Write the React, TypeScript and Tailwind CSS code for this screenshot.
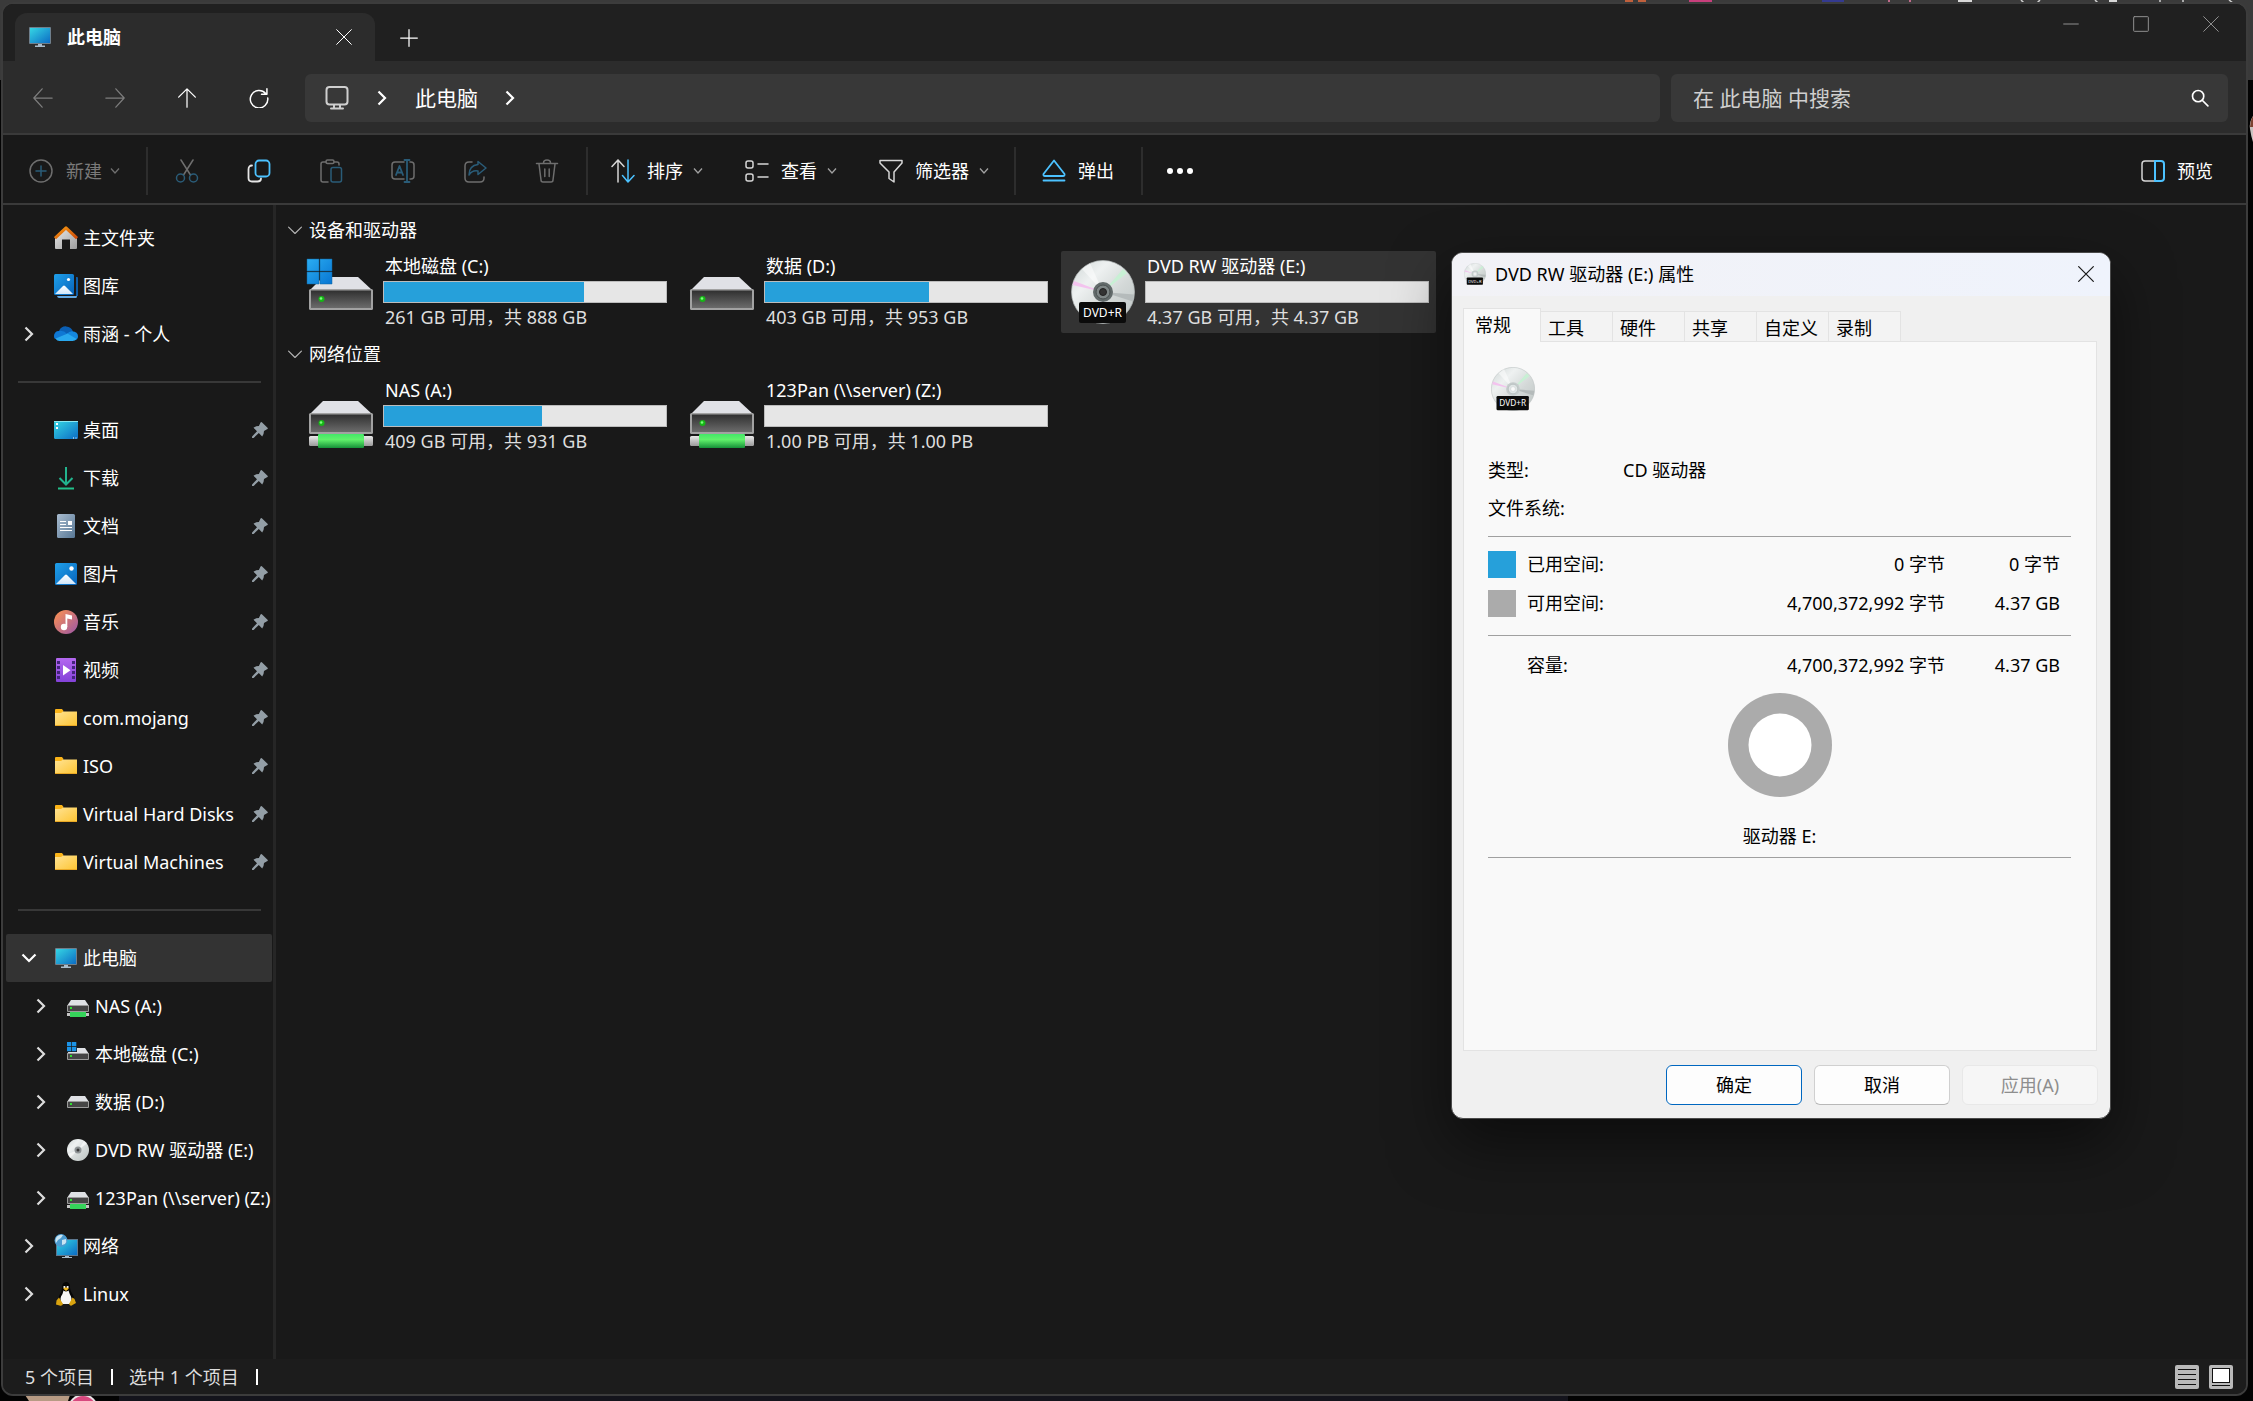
import { ReactNode } from "react";

type IconProps = { className?: string };

function Line({ children, className = "size-6", stroke = "#ffffff", width = 1.5 }: { children: ReactNode; className?: string; stroke?: string; width?: number }) {
  return (
    <svg viewBox="0 0 24 24" className={`shrink-0 ${className}`} fill="none" stroke={stroke} strokeWidth={width} strokeLinecap="round" strokeLinejoin="round" aria-hidden="true">
      {children}
    </svg>
  );
}

function ChevronSmall({ stroke = "#a0a0a0" }: { stroke?: string }) {
  return (
    <svg viewBox="0 0 10 8" className="h-2 w-[10px] shrink-0" fill="none" stroke={stroke} strokeWidth="1.3">
      <path d="M1 1.5 5 6l4-4.5" />
    </svg>
  );
}

function Chevron({ open, stroke = "#dcdcdc" }: { open?: boolean; stroke?: string }) {
  return (
    <svg viewBox="0 0 16 16" className="size-4 shrink-0" fill="none" stroke={stroke} strokeWidth="2.2">
      {open ? <path d="M1.5 4.5 8 11l6.500-6.500" /> : <path d="M4.500 1.500 11 8l-6.500 6.500" />}
    </svg>
  );
}

/* ---------- sidebar icons ---------- */

function Monitor({ className = "size-6" }: IconProps) {
  return (
    <svg viewBox="0 0 24 24" className={`shrink-0 ${className}`}>
      <defs>
        <linearGradient id="mon" x1="0" y1="0" x2="1" y2="1">
          <stop offset="0" stopColor="#35d6e4" />
          <stop offset="1" stopColor="#0c6cc4" />
        </linearGradient>
      </defs>
      <rect x="1" y="2" width="22" height="17" rx="1" fill="#6f7f8c" />
      <rect x="2" y="3" width="20" height="15" fill="url(#mon)" />
      <path d="M10 19h4v1.500h3V22H7v-1.500h3z" fill="#a9bccb" />
    </svg>
  );
}

function Home() {
  return (
    <svg viewBox="0 0 24 24" className="size-6 shrink-0">
      <defs>
        <linearGradient id="wall" x1="0" y1="0" x2="1" y2="1">
          <stop offset="0" stopColor="#e8e8e8" />
          <stop offset="1" stopColor="#9d9d9d" />
        </linearGradient>
        <linearGradient id="roof" x1="0" y1="0" x2="1" y2="1">
          <stop offset="0" stopColor="#f79a12" />
          <stop offset="1" stopColor="#cf4a08" />
        </linearGradient>
      </defs>
      <path d="M12 3 1 12.500V22q0 1 1 1h6V13.500h8V23h6q1 0 1-1v-9.500z" fill="url(#wall)" />
      <path d="M1 12.200 12 1.800l11 10.400" fill="none" stroke="url(#roof)" strokeWidth="3" strokeLinejoin="round" />
    </svg>
  );
}

function Picture({ gallery }: { gallery?: boolean }) {
  return (
    <svg viewBox="0 0 24 24" className="size-6 shrink-0">
      <defs>
        <linearGradient id="pic" x1="0" y1="0" x2="1" y2="1">
          <stop offset="0" stopColor="#1fa0ea" />
          <stop offset="1" stopColor="#0763bb" />
        </linearGradient>
        <linearGradient id="hill" x1="0" y1="0" x2="0" y2="1">
          <stop offset="0" stopColor="#ffffff" />
          <stop offset="1" stopColor="#cfe6fa" />
        </linearGradient>
      </defs>
      {gallery ? (
        <>
          <path d="M22 3h1q1 0 1 1v18h-2z" fill="#0f5ea8" />
          <path d="M3 22h20q0 2-1 2H5q-1.500 0-2-2z" fill="#62a8e2" />
          <rect x="0" y="0" width="20" height="21" rx="1.500" fill="url(#pic)" />
          <circle cx="14.500" cy="5.500" r="1.600" fill="#fff" />
          <path d="m1 20 8-8q1-1 2 0l8 8z" fill="url(#hill)" />
        </>
      ) : (
        <>
          <rect x="1" y="1" width="22" height="22" rx="1.500" fill="url(#pic)" />
          <circle cx="17.500" cy="6.500" r="2.200" fill="#fff" />
          <path d="m2 22 9-9q1-1 2 0l9 9z" fill="url(#hill)" />
        </>
      )}
    </svg>
  );
}

function Cloud() {
  return (
    <svg viewBox="0 0 24 24" className="size-6 shrink-0">
      <path d="M4 18a4.600 4.600 0 0 1 1-9.100A7.500 7.500 0 0 1 19 9.500L12 15z" fill="#0a5fb4" />
      <path d="M5 8.900A5.200 5.200 0 0 0 1 17l12-5.300q-3-3.400-8-2.800z" fill="#0f78d4" />
      <path d="M18 9.200q6 .5 6 5 0 3-3 4l-8-6.500q2-2.300 5-2.500z" fill="#1487dd" />
      <path d="M1.500 16.500 13.500 11.500l8.800 5.300Q21.200 19 18.500 19H5.500q-2.500 0-4-2.500z" fill="#29a8ee" />
    </svg>
  );
}

function Desktop() {
  return (
    <svg viewBox="0 0 24 24" className="size-6 shrink-0">
      <rect x="0" y="3" width="24" height="18" rx="1.500" fill="url(#mon)" />
      <path d="M0 3.500h24" stroke="#8ce8f2" strokeWidth="1" />
      <path d="M2 5h2v2H2zM2 9h2v2H2zM19 19.500h1v1h-1zM21.500 19.500h1v1h-1z" fill="#fff" />
    </svg>
  );
}

function Download() {
  return (
    <svg viewBox="0 0 24 24" className="size-6 shrink-0" fill="none" strokeWidth="2">
      <path d="M12 1v17M5.500 12l6.500 6.500L18.500 12" stroke="#22b48e" />
      <path d="M4 22.500h16" stroke="#22c08a" />
    </svg>
  );
}

function Doc() {
  return (
    <svg viewBox="0 0 24 24" className="size-6 shrink-0">
      <defs>
        <linearGradient id="doc" x1="0" y1="0" x2="1" y2="1">
          <stop offset="0" stopColor="#a9bccf" />
          <stop offset="1" stopColor="#587896" />
        </linearGradient>
      </defs>
      <rect x="3" y="0" width="18" height="24" rx="1.500" fill="url(#doc)" />
      <path d="M6 7.500h6M6 10.500h6M6 13.500h12M6 16.500h12" stroke="#fff" strokeWidth="1.200" />
      <rect x="14" y="7" width="4" height="4" fill="#fff" />
    </svg>
  );
}

function Music() {
  return (
    <svg viewBox="0 0 24 24" className="size-6 shrink-0">
      <defs>
        <linearGradient id="mus" x1="0" y1="0" x2="1" y2="1">
          <stop offset="0.100" stopColor="#f58d57" />
          <stop offset="1" stopColor="#9a56a8" />
        </linearGradient>
      </defs>
      <circle cx="12" cy="12" r="12" fill="url(#mus)" />
      <circle cx="10" cy="17" r="3.200" fill="#fff" />
      <path d="M11.500 17V4l6.500 1.500v4L13.300 8.500V17z" fill="#fff" />
    </svg>
  );
}

function Video() {
  return (
    <svg viewBox="0 0 24 24" className="size-6 shrink-0">
      <defs>
        <linearGradient id="vid" x1="0" y1="0" x2="0" y2="1">
          <stop offset="0" stopColor="#b468f0" />
          <stop offset="1" stopColor="#8342d8" />
        </linearGradient>
      </defs>
      <rect x="2" y="0" width="20" height="24" rx="1" fill="url(#vid)" />
      <path d="M3 3h3v3H3zM3 8h3v3H3zM3 13h3v3H3zM3 18h3v3H3zM18 3h3v3h-3zM18 8h3v3h-3zM18 13h3v3h-3zM18 18h3v3h-3z" fill="#44247c" />
      <path d="M9 7v10.500l7.500-5.200z" fill="#fff" />
    </svg>
  );
}

function Folder() {
  return (
    <svg viewBox="0 0 24 24" className="size-6 shrink-0">
      <defs>
        <linearGradient id="fold" x1="0" y1="0" x2="1" y2="1">
          <stop offset="0" stopColor="#ffe394" />
          <stop offset="1" stopColor="#fdc431" />
        </linearGradient>
      </defs>
      <path d="M1 4q0-1 1-1h6l1.500 2-1.500 3H1z" fill="#fbb418" />
      <path d="M1 7h6l2-1.500h14V20H1z" fill="url(#fold)" />
      <path d="M1 19.500h22" stroke="#e9a825" />
    </svg>
  );
}

function Pin() {
  return (
    <svg viewBox="0 0 16 16" className="size-4 shrink-0" fill="#939ea6">
      <path d="M8.300 1q.7-1.400 1.800-.6l5.400 5.400q.8.900-.5 1.500l-3 1.800q0 3.200-1.800 5.400L6.800 11 1.600 15.900 0 16l.1-1.600L5 9.200 1.500 5.800Q3.700 4 6.900 4z" />
    </svg>
  );
}

function MiniDrive({ network, windows }: { network?: boolean; windows?: boolean }) {
  return (
    <svg viewBox="0 0 24 24" className="size-6 shrink-0">
      <path d="M5 6h14l4 6H1z" fill="#dfe1e5" />
      <rect x="1" y="11" width="22" height="7" rx="1" fill="#9b9b9b" />
      <rect x="2" y="12" width="20" height="5" fill="#454545" />
      <path d="M4 13h2v2H4z" fill="#2ee02e" />
      {network && (
        <>
          <path d="M1 19h22v3H1z" fill="#c4c4c4" />
          <path d="M4 18h16v5H4z" fill="#35d35a" />
        </>
      )}
      {windows && (
        <>
          <path d="M0 0h11v10H0z" fill="#191919" />
          <path d="M1 0h4.300v4.300H1zM6 0h4.300v4.300H6zM1 5h4.300v4.300H1zM6 5h4.300v4.300H6z" fill="#1b93e6" />
        </>
      )}
    </svg>
  );
}

function MiniDisc() {
  return (
    <svg viewBox="0 0 24 24" className="size-6 shrink-0">
      <circle cx="12" cy="12" r="11" fill="url(#disc)" />
      <path d="M12 12 21 5.500A11 11 0 0 0 18 3zM12 12 2 16l2 4z" fill="#fff" opacity=".6" />
      <circle cx="12" cy="12" r="3.500" fill="#8f9496" />
      <circle cx="12" cy="12" r="1.500" fill="#3a3a3a" />
    </svg>
  );
}

function Network() {
  return (
    <svg viewBox="0 0 24 24" className="size-6 shrink-0">
      <rect x="2" y="5" width="22" height="17" fill="#5d7890" />
      <rect x="3" y="6" width="20" height="15" fill="url(#mon)" />
      <path d="M11 22h4v1h3v1H8v-1h3z" fill="#a9bccb" />
      <circle cx="7" cy="6.500" r="6.500" fill="#4b9bd0" />
      <path d="M3 2.500q3-2.500 6-1.500L7 4 4 6 2 9Q.500 5.500 3 2.500zM8 6l4-1q1 3-1 5l-3 1z" fill="#c9e4f2" />
    </svg>
  );
}

function Tux() {
  return (
    <svg viewBox="0 0 24 24" className="size-6 shrink-0">
      <path d="M8 6q0-6 4-6t4 5.500q0 3 3 7.500 2.500 5-1 9H6q-3-4-.500-9Q8 9.500 8 6z" fill="#050505" />
      <path d="M9.500 8.500q2.500 2 5 0 1 3.500 2.500 6 1.500 4-1.500 7.500h-7Q5.500 18.500 7 14.500q2-3 2.500-6z" fill="#f6f6f6" />
      <path d="M9.500 4h1.800v2H9.500zM12.700 4h1.800v2h-1.800z" fill="#eee" />
      <path d="m9 6.500 3-1.200 3 1.200-3 2.500z" fill="#f0b51b" />
      <path d="m5 15.500 4 6.500q-1 2.500-3.500 1.500L2 22.500l.5-4zM18.500 15.500 15 22q1.500 3 3.500 1l3.500-2-1.500-4z" fill="#d9a30f" />
    </svg>
  );
}

/* ---------- drive icons ---------- */

function BigDrive({ network, windows }: { network?: boolean; windows?: boolean }) {
  return (
    <svg viewBox="0 0 64 64" className="size-16 shrink-0 overflow-visible">
      <defs>
        <linearGradient id="front" x1="0" y1="0" x2="0" y2="1">
          <stop offset="0" stopColor="#303030" />
          <stop offset="1" stopColor="#6b6b6b" />
        </linearGradient>
        <linearGradient id="pipe" x1="0" y1="0" x2="0" y2="1">
          <stop offset="0" stopColor="#43e768" />
          <stop offset="0.400" stopColor="#61f26b" />
          <stop offset="1" stopColor="#159038" />
        </linearGradient>
        <linearGradient id="steel" x1="0" y1="0" x2="0" y2="1">
          <stop offset="0" stopColor="#e9e9e9" />
          <stop offset="1" stopColor="#9a9a9a" />
        </linearGradient>
        <linearGradient id="win" x1="0" y1="0" x2="1" y2="1">
          <stop offset="0" stopColor="#2badf2" />
          <stop offset="1" stopColor="#0775d2" />
        </linearGradient>
      </defs>
      <path d="M14 17h35l14 13H1z" fill="#e0e1e6" />
      <rect x="0" y="29" width="64" height="21" rx="1.500" fill="#a2a2a2" />
      <rect x="2" y="30.500" width="60" height="17.500" fill="url(#front)" />
      <circle cx="12.500" cy="39" r="3" fill="#17b617" />
      <circle cx="12" cy="38.500" r="1.300" fill="#7cff7c" />
      {network && (
        <>
          <rect x="0" y="52" width="64" height="10" rx="1.500" fill="url(#steel)" />
          <rect x="9" y="50" width="46" height="14" rx="1" fill="url(#pipe)" />
        </>
      )}
      {windows && <path d="M-2-1h12v12H-2zM11-1h12v12H11zM-2 12h12v12H-2zM11 12h12v12H11z" fill="url(#win)" stroke="#12649f" strokeWidth=".5" />}
    </svg>
  );
}

function Disc({ className = "size-16", light }: { className?: string; light?: boolean }) {
  return (
    <svg viewBox="0 0 64 64" className={`shrink-0 ${className}`}>
      <defs>
        <linearGradient id="disc" x1="0" y1="0" x2="1" y2="1">
          <stop offset="0" stopColor="#cfd6d5" />
          <stop offset="0.300" stopColor="#eef1f1" />
          <stop offset="0.600" stopColor="#d4d9d8" />
          <stop offset="1" stopColor="#bcc3c2" />
        </linearGradient>
      </defs>
      <circle cx="32" cy="32" r="31.500" fill="url(#disc)" stroke="#b4baba" strokeWidth=".7" />
      <path d="M32 32 3 21l-1.500 4z" fill="#f3c3ee" />
      <path d="m32 32 20-23 4 4z" fill="#c8f0d4" />
      <path d="M32 32l31 2.500-1 7z" fill="#b5bbbb" />
      <path d="M32 32 11 9l8-6z" fill="#fff" opacity=".5" />
      <circle cx="32" cy="32" r="10" fill={light ? "#c5cccc" : "#636b6b"} />
      <circle cx="32" cy="32" r="7" fill={light ? "#dfe5e5" : "#7e8686"} stroke={light ? "#b0b8b8" : "#495050"} />
      <circle cx="32" cy="32" r="3.500" fill={light ? "#fafafa" : "#333333"} stroke={light ? "#d0d6d6" : "#222"} />
      <rect x="8" y="42" width="47" height="21" rx="2" fill="#0b0b0b" />
      <text x="31.500" y="57" textAnchor="middle" fontSize="12" fill="#ffffff" fontFamily="Noto Sans, sans-serif">DVD+R</text>
    </svg>
  );
}

/* ---------- data ---------- */

type NavItem = { label: string; icon: ReactNode; chevron?: boolean; open?: boolean; child?: boolean; pinned?: boolean };

const topItems: NavItem[] = [
  { label: "主文件夹", icon: <Home /> },
  { label: "图库", icon: <Picture gallery /> },
  { label: "雨涵 - 个人", icon: <Cloud />, chevron: true },
];

const pinnedItems: NavItem[] = [
  { label: "桌面", icon: <Desktop />, pinned: true },
  { label: "下载", icon: <Download />, pinned: true },
  { label: "文档", icon: <Doc />, pinned: true },
  { label: "图片", icon: <Picture />, pinned: true },
  { label: "音乐", icon: <Music />, pinned: true },
  { label: "视频", icon: <Video />, pinned: true },
  { label: "com.mojang", icon: <Folder />, pinned: true },
  { label: "ISO", icon: <Folder />, pinned: true },
  { label: "Virtual Hard Disks", icon: <Folder />, pinned: true },
  { label: "Virtual Machines", icon: <Folder />, pinned: true },
];

const treeItems: NavItem[] = [
  { label: "此电脑", icon: <Monitor />, chevron: true, open: true },
  { label: "NAS (A:)", icon: <MiniDrive network />, chevron: true, child: true },
  { label: "本地磁盘 (C:)", icon: <MiniDrive windows />, chevron: true, child: true },
  { label: "数据 (D:)", icon: <MiniDrive />, chevron: true, child: true },
  { label: "DVD RW 驱动器 (E:)", icon: <MiniDisc />, chevron: true, child: true },
  { label: "123Pan (\\\\server) (Z:)", icon: <MiniDrive network />, chevron: true, child: true },
  { label: "网络", icon: <Network />, chevron: true },
  { label: "Linux", icon: <Tux />, chevron: true },
];

type Drive = { name: string; info: string; used: number; icon: ReactNode; selected?: boolean };

const groups: { title: string; drives: Drive[] }[] = [
  {
    title: "设备和驱动器",
    drives: [
      { name: "本地磁盘 (C:)", info: "261 GB 可用，共 888 GB", used: 71, icon: <BigDrive windows /> },
      { name: "数据 (D:)", info: "403 GB 可用，共 953 GB", used: 58, icon: <BigDrive /> },
      { name: "DVD RW 驱动器 (E:)", info: "4.37 GB 可用，共 4.37 GB", used: 0, icon: <Disc />, selected: true },
    ],
  },
  {
    title: "网络位置",
    drives: [
      { name: "NAS (A:)", info: "409 GB 可用，共 931 GB", used: 56, icon: <BigDrive network /> },
      { name: "123Pan (\\\\server) (Z:)", info: "1.00 PB 可用，共 1.00 PB", used: 0, icon: <BigDrive network /> },
    ],
  },
];

/* ---------- pieces ---------- */

function NavRow({ item }: { item: NavItem }) {
  return (
    <button
      className={`flex h-12 w-full items-center overflow-hidden rounded-xs pr-1 text-left whitespace-nowrap ${item.child ? "pl-[27px]" : "pl-[15px]"} ${item.open ? "bg-[#333333]" : ""}`}>
      <span className="w-[33px] shrink-0">{item.chevron && <Chevron open={item.open} stroke={item.open ? "#ffffff" : "#dcdcdc"} />}</span>
      {item.icon}
      <span className={`pl-[5px] ${item.child ? "shrink-0" : "min-w-0 grow"}`}>{item.label}</span>
      {item.pinned && <Pin />}
    </button>
  );
}

function Divider() {
  return (
    <div className="flex h-12 items-center pr-[11px] pl-3">
      <hr className="h-[2px] w-full border-0 bg-[#383838]" />
    </div>
  );
}

function DriveTile({ drive }: { drive: Drive }) {
  return (
    <button className={`flex h-[82px] w-[375px] gap-[10px] rounded-xs pl-[10px] text-left ${drive.selected ? "bg-[#333333]" : ""}`}>
      <span className="pt-[9px]">{drive.icon}</span>
      <span className="block w-[284px]">
        <span className="block pl-[2px] leading-[30px]">{drive.name}</span>
        <span className="block h-[22px] border border-[#bcbcbc] bg-[#e6e6e6]">
          <span className="block h-full bg-[#26a0da]" style={{ width: `${drive.used}%` }} />
        </span>
        <span className="block pl-[2px] leading-7 text-[#dedede]">{drive.info}</span>
      </span>
    </button>
  );
}

function ToolButton({ label, children }: { label: string; children: ReactNode }) {
  return (
    <button aria-label={label} className="flex w-[72px] justify-center">
      {children}
    </button>
  );
}

function TitleBar() {
  return (
    <header className="flex h-[57px] items-start bg-[#202020]">
      <div className="mt-[9px] ml-3 flex h-12 w-[360px] items-center rounded-t-xl bg-[#2c2c2c] pr-[23px] pl-[13px]">
        <Monitor />
        <h1 className="grow pl-[15px] font-bold">此电脑</h1>
        <button aria-label="关闭标签页">
          <Line className="size-4"><path d="M1 1l22 22M23 1 1 23" /></Line>
        </button>
      </div>
      <button aria-label="新建标签页" className="mt-6 ml-6">
        <Line className="size-5"><path d="M12 2v20M2 12h20" /></Line>
      </button>
      <div className="ml-auto flex">
        <button aria-label="最小化" className="flex h-[39px] w-[70px] items-center justify-center">
          <Line className="size-4" stroke="#8f8f8f"><path d="M1 12h22" /></Line>
        </button>
        <button aria-label="最大化" className="flex h-[39px] w-[70px] items-center justify-center">
          <Line className="size-4" stroke="#8f8f8f"><rect x="1" y="1" width="22" height="22" rx="1" /></Line>
        </button>
        <button aria-label="关闭" className="flex h-[39px] w-[70px] items-center justify-center">
          <Line className="size-4" stroke="#8f8f8f"><path d="M1 1l22 22M23 1 1 23" /></Line>
        </button>
      </div>
    </header>
  );
}

function AddressBar() {
  return (
    <nav className="flex h-[74px] items-center border-b-2 border-[#3a3a3a] bg-[#2c2c2c] pt-px pr-[18px] pl-1">
      <ToolButton label="后退"><Line className="size-5" stroke="#7d7d7d"><path d="M23 12H1M11 1 1 12l10 11" /></Line></ToolButton>
      <ToolButton label="前进"><Line className="size-5" stroke="#7d7d7d"><path d="M1 12h22M13 1l10 11-10 11" /></Line></ToolButton>
      <ToolButton label="向上"><Line className="size-5"><path d="M12 23V1M2 11 12 1l10 10" /></Line></ToolButton>
      <ToolButton label="刷新">
        <Line className="size-5" width={1.8}><path d="M20 6.500A10.500 10.500 0 1 0 22.500 12M21.500 1v6.500H15" /></Line>
      </ToolButton>
      <div className="ml-[10px] flex h-12 grow items-center rounded-md bg-[#383838] pl-5 text-[21px]">
        <Line stroke="#cfcfcf" width={2}><rect x="1.500" y="1" width="21" height="17.500" rx="3" /><path d="M9 19v3M15 19v3M6 22.500h12" /></Line>
        <span className="flex w-[66px] justify-center"><Chevron stroke="#ffffff" /></span>
        <button>此电脑</button>
        <span className="flex w-[64px] justify-center"><Chevron stroke="#ffffff" /></span>
      </div>
      <label className="ml-[11px] flex h-12 w-[557px] items-center rounded-md bg-[#383838] pr-[19px] pl-[22px]">
        <input type="search" aria-label="搜索" placeholder="在 此电脑 中搜索" className="min-w-0 grow bg-transparent text-[21px] outline-none placeholder:text-[#cfcfcf]" />
        <Line className="size-[18px]" width={2.200}><circle cx="9.500" cy="9.500" r="7.500" /><path d="m15 15 7.500 7.500" /></Line>
      </label>
    </nav>
  );
}

function Separator() {
  return <span className="h-12 w-[2px] bg-[#2d2d2d]" />;
}

function Toolbar() {
  const dim = "#6e6e6e";
  const blueDim = "#2a5c78";
  const blue = "#4cc2ff";
  return (
    <div className="flex h-[70px] items-center border-b-2 border-[#3a3a3a] bg-[#191919] pt-[3px]">
      <button className="ml-[26px] flex w-[117px] items-center text-[#7a7a7a]">
        <Line stroke={dim}><circle cx="12" cy="12" r="11" /><path d="M7 12h10M12 7v10" stroke={blueDim} /></Line>
        <span className="pr-2 pl-[13px]">新建</span>
        <ChevronSmall stroke={dim} />
      </button>
      <Separator />
      <div className="flex w-[438px] pl-[3px]">
        <ToolButton label="剪切">
          <Line stroke={dim}><path d="M6 1l9.500 15M18 1 8.500 16" /><circle cx="5.500" cy="19" r="4" stroke={blueDim} /><circle cx="18.500" cy="19" r="4" stroke={blueDim} /></Line>
        </ToolButton>
        <ToolButton label="复制">
          <Line stroke="#e6e6e6" width={1.800}><path d="M5 6.500q-3.500 0-3.500 4V19q0 3.500 3.500 3.500h5.500q3.500 0 3.500-3" /><rect x="8.500" y="1.500" width="14" height="16" rx="3.500" stroke={blue} /></Line>
        </ToolButton>
        <ToolButton label="粘贴">
          <Line stroke={dim}><path d="M7 3H4Q2 3 2 5v16q0 2 2 2h5M15 3h3q2 0 2 2v1" /><rect x="7" y="1" width="8" height="3.500" rx="1.500" /><rect x="12" y="8.500" width="10.500" height="14.500" rx="2" stroke={blueDim} /></Line>
        </ToolButton>
        <ToolButton label="重命名">
          <Line stroke={dim}>
            <path d="M13 3H4Q1 3 1 6v11q0 3 3 3h9M19 3h1q3 0 3 3v11q0 3-3 3h-1" />
            <path d="M5 16 8.500 7 12 16M6 13.500h5M16 1v22M13.500 1h5M13.500 23h5" stroke={blueDim} strokeWidth="1.800" />
          </Line>
        </ToolButton>
        <ToolButton label="共享">
          <Line stroke={dim}><path d="M9 3H6Q2 3 2 7v12q0 4 4 4h11q4 0 4-4v-1" /><path d="M15 2.500 23 9l-8 6.500V12q-6-1-9 4 0-9.500 9-10.500z" stroke={blueDim} /></Line>
        </ToolButton>
        <ToolButton label="删除">
          <Line stroke={dim}><path d="M1.500 4.500h21M8.500 4q0-3 3.500-3t3.500 3M4 5l2 16q0 2 2 2h8q2 0 2-2l2-16M9.800 10v7.500M14.200 10v7.500" /></Line>
        </ToolButton>
      </div>
      <Separator />
      <button className="ml-[23px] flex items-center">
        <Line stroke="#d6d6d6"><path d="M7 23V1M1 7.500 7 1l6 6.500" /><path d="M17 1v22M11.500 16.500 17 23l6-6.500" stroke={blue} /></Line>
        <span className="pr-[10px] pl-3">排序</span>
        <ChevronSmall />
      </button>
      <button className="ml-[42px] flex items-center">
        <Line stroke="#d6d6d6"><rect x="1" y="2" width="7" height="7" rx="2" /><rect x="1" y="15" width="7" height="7" rx="2" /><path d="M13 5h10M13 18h10" /></Line>
        <span className="pr-[10px] pl-3">查看</span>
        <ChevronSmall />
      </button>
      <button className="ml-[42px] flex items-center">
        <Line stroke="#d6d6d6"><path d="M1 1.500h22v2.500l-8 9V23l-5-3.500V13L1 4z" /></Line>
        <span className="pr-[10px] pl-3">筛选器</span>
        <ChevronSmall />
      </button>
      <span className="ml-[25px] flex"><Separator /></span>
      <button className="ml-[26px] flex items-center">
        <Line stroke={blue} width={1.800}><path d="M12 1.500 22.500 15q.500 2-1.500 2H3q-2 0-1.500-2zM1.500 21.500h21" /></Line>
        <span className="pl-3">弹出</span>
      </button>
      <span className="ml-[27px] flex"><Separator /></span>
      <button aria-label="查看更多" className="ml-6 flex gap-1">
        <span className="size-[6px] rounded-full bg-white" />
        <span className="size-[6px] rounded-full bg-white" />
        <span className="size-[6px] rounded-full bg-white" />
      </button>
      <button className="mr-[33px] ml-auto flex items-center">
        <Line stroke="#d6d6d6"><path d="M14 2H4Q1 2 1 5v14q0 3 3 3h10" /><path d="M14 2h6q3 0 3 3v14q0 3-3 3h-6z" stroke={blue} strokeWidth="2" /></Line>
        <span className="pl-3">预览</span>
      </button>
    </div>
  );
}

function Property({ label, value }: { label: string; value?: string }) {
  return (
    <div className="flex h-[38px] items-center">
      <dt className="w-[135px]">{label}</dt>
      <dd>{value}</dd>
    </div>
  );
}

function SpaceRow({ color, label, bytes, size }: { color?: string; label: string; bytes: string; size: string }) {
  return (
    <tr className="h-[39px]">
      <td className="w-[39px] p-0">{color && <div className={`h-[27px] w-7 ${color}`} />}</td>
      <th scope="row" className="p-0 pb-[2px] text-left font-normal">{label}</th>
      <td className="p-0 pb-[2px] text-right">{bytes}</td>
      <td className="w-[126px] p-0 pr-[11px] pb-[2px] text-right">{size}</td>
    </tr>
  );
}

function PropertiesDialog() {
  return (
    <section
      role="dialog"
      aria-labelledby="props-title"
      className="absolute top-[252px] right-[142px] w-[660px] overflow-hidden rounded-xl border border-[#4a4a4a] bg-[#f0f0f0] text-black shadow-[0_24px_60px_rgba(0,0,0,0.5)]">
      <header className="flex h-[43px] items-center bg-linear-to-r from-[#f2f2f6] to-[#eff3fc] pr-4 pb-[2px] pl-3">
        <Disc className="size-[22px]" light />
        <h2 id="props-title" className="grow pl-[9px]">DVD RW 驱动器 (E:) 属性</h2>
        <button aria-label="关闭">
          <Line className="size-4" stroke="#1a1a1a" width={1.800}><path d="M1 1l22 22M23 1 1 23" /></Line>
        </button>
      </header>

      <div role="tablist" className="flex h-[45px] items-end px-[11px]">
        <button role="tab" aria-selected="true" className="relative top-px h-[34px] w-[78px] border border-b-0 border-[#e3e3e3] bg-[#f9f9f9] pb-[2px] pl-[11px] text-left">常规</button>
        {["工具", "硬件", "共享", "自定义", "录制"].map((tab) => (
          <button key={tab} role="tab" aria-selected="false" className="h-[30px] w-[72px] border border-b-0 border-l-0 border-[#e3e3e3] bg-[#f3f3f3] pt-[2px] pl-[7px] text-left whitespace-nowrap">
            {tab}
          </button>
        ))}
      </div>

      <div className="mr-[13px] ml-[11px] h-[710px] border border-[#e3e3e3] bg-[#f9f9f9] pt-[25px] pr-[25px] pl-6 leading-6">
        <Disc className="ml-[3px] size-11" light />
        <dl className="mt-10">
          <Property label="类型:" value="CD 驱动器" />
          <Property label="文件系统:" />
        </dl>
        <hr className="mt-[9px] border-[#a0a0a0]" />
        <table className="mt-2 w-full border-collapse">
          <tbody>
            <SpaceRow color="bg-[#26a0da]" label="已用空间:" bytes="0 字节" size="0 字节" />
            <SpaceRow color="bg-[#ababab]" label="可用空间:" bytes="4,700,372,992 字节" size="4.37 GB" />
          </tbody>
        </table>
        <hr className="mt-3 border-[#a0a0a0]" />
        <table className="mt-[10px] w-full border-collapse">
          <tbody>
            <SpaceRow label="容量:" bytes="4,700,372,992 字节" size="4.37 GB" />
          </tbody>
        </table>
        <svg viewBox="0 0 104 104" className="mx-auto mt-2 size-[104px]">
          <circle cx="52" cy="52" r="52" fill="#ababab" />
          <circle cx="52" cy="52" r="31.500" fill="#ffffff" />
        </svg>
        <p className="mt-[27px] text-center">驱动器 E:</p>
        <hr className="mt-[9px] border-[#a0a0a0]" />
      </div>

      <footer className="flex justify-end gap-3 pt-[14px] pr-3 pb-[13px]">
        <button className="h-10 w-[136px] rounded-md border border-[#0067c0] bg-[#fdfdfd]">确定</button>
        <button className="h-10 w-[136px] rounded-md border border-[#d0d0d0] border-b-[#b8b8b8] bg-[#fdfdfd]">取消</button>
        <button disabled className="h-10 w-[136px] rounded-md border border-[#e8e8e8] bg-[#f6f6f6] text-[#8e8e8e]">应用(A)</button>
      </footer>
    </section>
  );
}

// slivers of the desktop that show around the window
function Backdrop() {
  return (
    <>
      <svg viewBox="0 0 900 3" className="absolute top-0 right-0 h-[3px] w-[900px]" aria-hidden="true">
        <path d="M272 0h8v3h-8zM285 0h8v3h-8z" fill="#c0603c" />
        <path d="M336 0h23v3h-23z" fill="#c83f7c" />
        <path d="M469 0h22v3h-22z" fill="#343a90" />
        <path d="M535 0h2v3h-2zM556 0h2v3h-2z" fill="#c06a8a" />
        <path d="M605 0h14v3h-14zM756 0h8v3h-8z" fill="#d8d8d8" />
        <path d="M668 0l3 3M684 3l3-3M742 0l3 3M807 0v3M830 0v3M876 0l4 3" stroke="#d0d0d0" strokeWidth="1.500" />
      </svg>
      <svg viewBox="0 0 1600 6" className="absolute bottom-0 left-0 h-[6px] w-[1600px]" aria-hidden="true">
        <path d="M119 0h1449v6H119z" fill="#14141c" />
        <path d="M25 0h45l-2 6H29z" fill="#b79b84" />
        <circle cx="83" cy="14" r="15" fill="#e9e4e6" />
        <circle cx="83" cy="14" r="13" fill="#d8487e" />
      </svg>
      <svg viewBox="0 0 4 26" className="absolute top-[116px] right-0 h-[26px] w-1" aria-hidden="true">
        <path d="M4 0Q0 6 1 13t3 13z" fill="#c9c2c0" />
        <path d="M4 0Q1 5 1 11h3z" fill="#7c4230" />
      </svg>
    </>
  );
}

export default function App() {
  return (
    <div className="relative flex min-h-screen flex-col bg-linear-to-b from-[#3a3a3a] from-[80px] to-[#030303] to-[80px] pt-[2px] pr-[5px] pb-[5px] pl-px font-['Noto_Sans','Noto_Sans_CJK_SC',sans-serif] text-[18px] leading-6 text-white">
      <Backdrop />
      <div className="relative flex grow flex-col overflow-hidden rounded-xl border-2 border-[#3c3c3c] bg-[#191919]">
        <TitleBar />
        <AddressBar />
        <Toolbar />

        <div className="flex grow">
          <aside className="w-[273px] shrink-0 border-r-[3px] border-[#262626] pt-[9px] pr-px pl-[3px]">
            {topItems.map((item) => <NavRow key={item.label} item={item} />)}
            <Divider />
            {pinnedItems.map((item) => <NavRow key={item.label} item={item} />)}
            <Divider />
            {treeItems.map((item) => <NavRow key={item.label} item={item} />)}
          </aside>

          <main className="min-w-0 grow pt-1">
            {groups.map((group) => (
              <section key={group.title}>
                <h2>
                  <button className="flex h-[42px] items-center pl-3">
                    <Line className="mr-[7px] size-[14px]" stroke="#b5b5b5" width={2}><path d="M1 7l11 11L23 7" /></Line>
                    {group.title}
                  </button>
                </h2>
                <div className="flex flex-wrap gap-[6px] pl-[23px]">
                  {group.drives.map((drive) => <DriveTile key={drive.name} drive={drive} />)}
                </div>
              </section>
            ))}
          </main>
        </div>

        <footer className="flex h-[35px] items-center bg-[#1c1c1c] pr-[13px] pl-[22px] text-[#dedede]">
          <span className="w-[86px]">5 个项目</span>
          <span className="mr-4 h-4 w-[2px] bg-white" />
          <span className="w-[127px]">选中 1 个项目</span>
          <span className="h-4 w-[2px] bg-white" />
          <div className="ml-auto flex gap-[10px]">
            <button aria-label="详细信息">
              <svg viewBox="0 0 24 24" className="size-6">
                <rect width="24" height="24" rx="2" fill="#b9b9b9" />
                <path d="M3 4.500h18M3 9.500h18M3 14.500h18M3 19.500h18" stroke="#111" />
              </svg>
            </button>
            <button aria-label="大图标">
              <svg viewBox="0 0 24 24" className="size-6">
                <rect width="24" height="24" rx="2" fill="#b9b9b9" />
                <rect x="3.500" y="3.500" width="17" height="14" fill="#fff" stroke="#111" />
                <path d="M3 20.500h18" stroke="#111" />
              </svg>
            </button>
          </div>
        </footer>
      </div>

      <PropertiesDialog />
    </div>
  );
}
